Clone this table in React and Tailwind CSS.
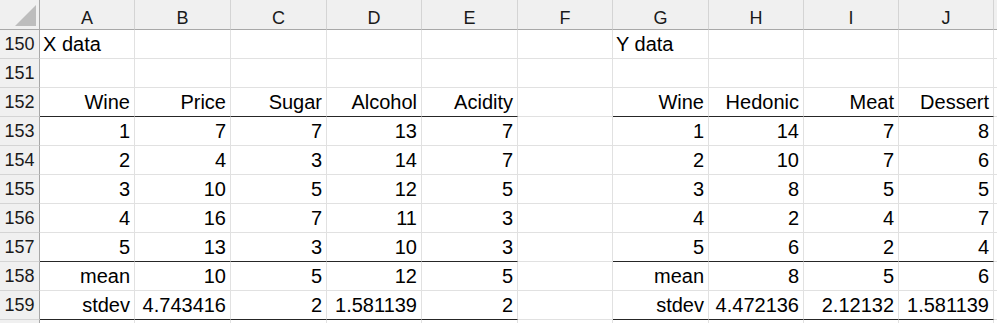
const cols = [
  { key: 'A', w: 'w-[95px]' },
  { key: 'B', w: 'w-[96px]' },
  { key: 'C', w: 'w-[96px]' },
  { key: 'D', w: 'w-[95px]' },
  { key: 'E', w: 'w-[96px]' },
  { key: 'F', w: 'w-[95px]' },
  { key: 'G', w: 'w-[96px]' },
  { key: 'H', w: 'w-[95px]' },
  { key: 'I', w: 'w-[95px]' },
  { key: 'J', w: 'w-[95px]' },
]

// row number -> cell values (A..J); rule = dark rule under the table blocks
const rows = [
  { n: 150, cells: ['X data', '', '', '', '', '', 'Y data', '', '', ''], left: true },
  { n: 151, cells: ['', '', '', '', '', '', '', '', '', ''] },
  { n: 152, cells: ['Wine', 'Price', 'Sugar', 'Alcohol', 'Acidity', '', 'Wine', 'Hedonic', 'Meat', 'Dessert'], rule: true },
  { n: 153, cells: ['1', '7', '7', '13', '7', '', '1', '14', '7', '8'] },
  { n: 154, cells: ['2', '4', '3', '14', '7', '', '2', '10', '7', '6'] },
  { n: 155, cells: ['3', '10', '5', '12', '5', '', '3', '8', '5', '5'] },
  { n: 156, cells: ['4', '16', '7', '11', '3', '', '4', '2', '4', '7'] },
  { n: 157, cells: ['5', '13', '3', '10', '3', '', '5', '6', '2', '4'], rule: true },
  { n: 158, cells: ['mean', '10', '5', '12', '5', '', 'mean', '8', '5', '6'] },
  { n: 159, cells: ['stdev', '4.743416', '2', '1.581139', '2', '', 'stdev', '4.472136', '2.12132', '1.581139'], rule: true },
  { n: '', cells: ['', '', '', '', '', '', '', '', '', ''] },
]

function Corner() {
  return (
    <div className="w-[40px] h-[30px] shrink-0 bg-[#f0f0f0] border-r border-b border-r-[#a8a8a8] border-b-[#a8a8a8]">
      <svg width="39" height="29" viewBox="0 0 39 29">
        <polygon points="36,5 36,26 15,26" fill="#bdbdbd" />
      </svg>
    </div>
  )
}

function Cell({ value, col, idx, row }) {
  const inTable = idx !== 5
  const ruled = row.rule && inTable
  const leftText = row.left
  return (
    <div
      className={`${col.w} h-[29px] shrink-0 border-r border-b border-r-[#e1e1e1] ${
        ruled ? 'border-b-[#262626]' : 'border-b-[#e1e1e1]'
      } ${leftText ? 'pl-[3px] text-left' : 'pr-[4px] text-right'} whitespace-nowrap overflow-visible text-[20px] leading-[28px] text-black`}
    >
      {value}
    </div>
  )
}

export default function App() {
  return (
    <div className="w-[997px] h-[323px] overflow-hidden bg-white" style={{ fontFamily: '"Liberation Sans", Arial, sans-serif' }}>
      <div className="flex">
        <Corner />
        {cols.map((c) => (
          <div
            key={c.key}
            className={`${c.w} h-[30px] shrink-0 bg-[#f0f0f0] border-r border-b border-r-[#d4d4d4] border-b-[#a8a8a8] text-center text-[18px] leading-[20px] pt-[8px] text-[#1a1a1a]`}
          >
            {c.key}
          </div>
        ))}
        <div className="flex-1 h-[30px] bg-[#f0f0f0] border-b border-b-[#a8a8a8]" />
      </div>
      {rows.map((r, ri) => (
        <div key={ri} className="flex">
          <div className="w-[40px] h-[29px] shrink-0 bg-[#f0f0f0] border-r border-b border-r-[#a8a8a8] border-b-[#d4d4d4] text-center text-[18px] leading-[28px] text-[#1a1a1a]">
            {r.n}
          </div>
          {cols.map((c, i) => (
            <Cell key={c.key} value={r.cells[i]} col={c} idx={i} row={r} />
          ))}
          <div className="flex-1 h-[29px] border-b border-b-[#e1e1e1]" />
        </div>
      ))}
    </div>
  )
}
